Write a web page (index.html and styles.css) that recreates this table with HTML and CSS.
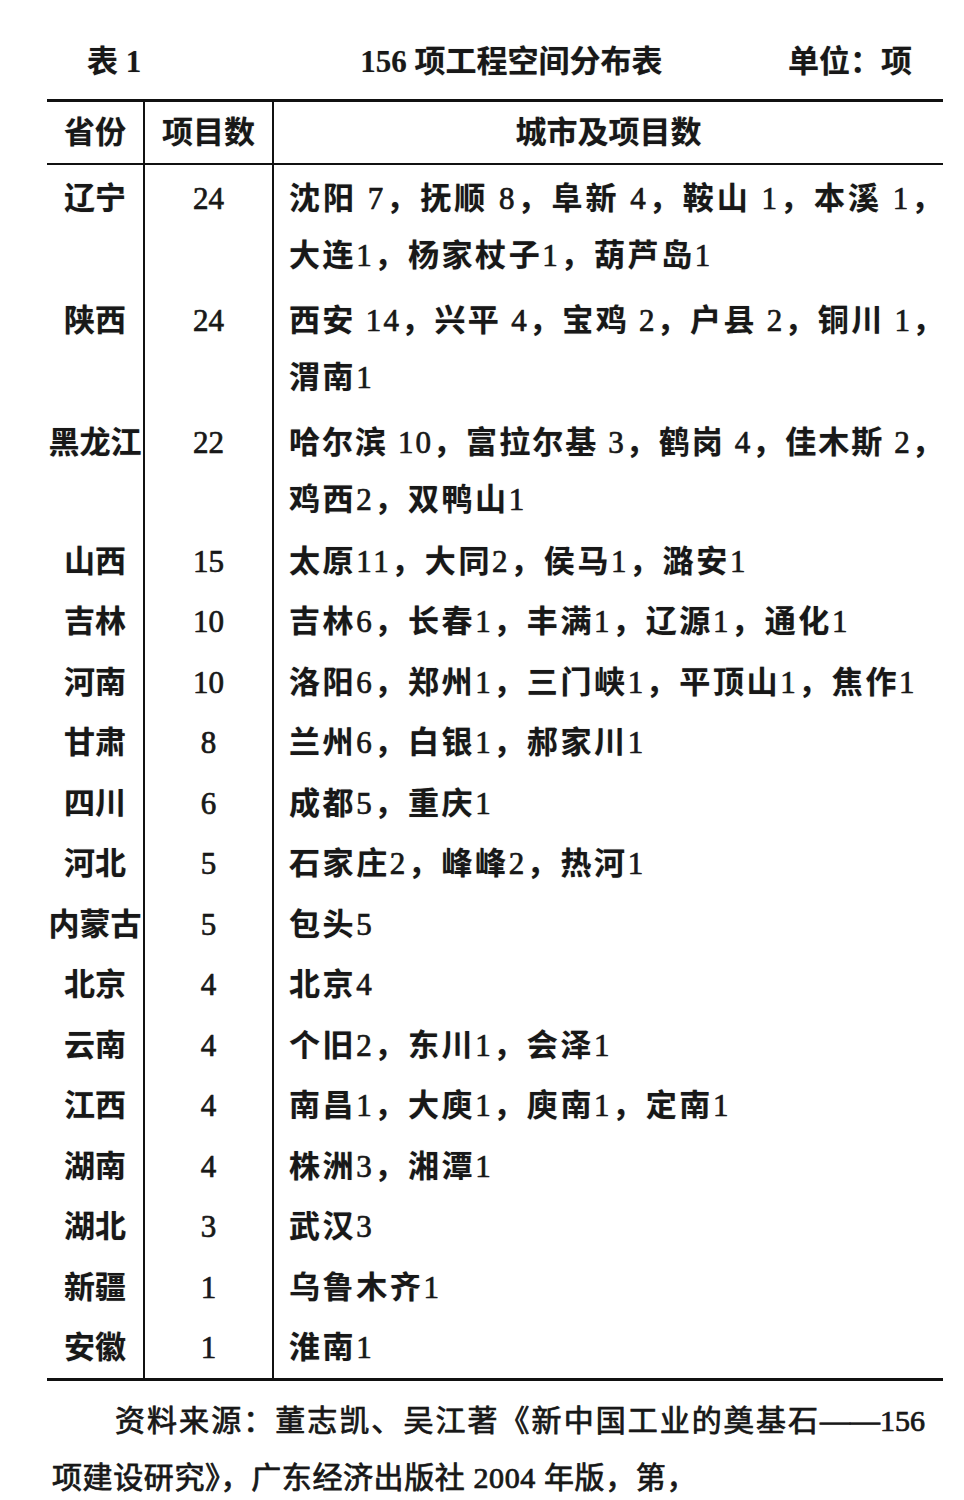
FILE: index.html
```html
<!DOCTYPE html>
<html lang="zh-CN">
<head>
<meta charset="utf-8">
<title>156 项工程空间分布表</title>
<link rel="stylesheet" href="styles.css">
</head>
<body>
<div class="page">
  <div class="caption">
    <span class="cap-num">表 1</span>
    <span class="cap-title">156 项工程空间分布表</span>
    <span class="cap-unit">单位：项</span>
  </div>

  <table class="grid">
    <colgroup>
      <col class="c1">
      <col class="c2">
      <col class="c3">
    </colgroup>
    <thead>
      <tr>
        <th class="prov">省份</th>
        <th class="cnt-h">项目数</th>
        <th class="city-h">城市及项目数</th>
      </tr>
    </thead>
    <tbody>
      <tr class="two">
        <td class="prov">辽宁</td>
        <td class="cnt">24</td>
        <td class="city"><div class="ls-a">沈阳 <span class="d">7</span>，抚顺 <span class="d">8</span>，阜新 <span class="d">4</span>，鞍山 <span class="d">1</span>，本溪 <span class="d">1</span>，</div><div>大连<span class="d">1</span>，杨家杖子<span class="d">1</span>，葫芦岛<span class="d">1</span></div></td>
      </tr>
      <tr class="two">
        <td class="prov">陕西</td>
        <td class="cnt">24</td>
        <td class="city"><div class="ls-b">西安 <span class="d">14</span>，兴平 <span class="d">4</span>，宝鸡 <span class="d">2</span>，户县 <span class="d">2</span>，铜川 <span class="d">1</span>，</div><div>渭南<span class="d">1</span></div></td>
      </tr>
      <tr class="two">
        <td class="prov">黑龙江</td>
        <td class="cnt">22</td>
        <td class="city"><div class="ls-c">哈尔滨 <span class="d">10</span>，富拉尔基 <span class="d">3</span>，鹤岗 <span class="d">4</span>，佳木斯 <span class="d">2</span>，</div><div>鸡西<span class="d">2</span>，双鸭山<span class="d">1</span></div></td>
      </tr>
      <tr>
        <td class="prov">山西</td>
        <td class="cnt">15</td>
        <td class="city">太原<span class="d">11</span>，大同<span class="d">2</span>，侯马<span class="d">1</span>，潞安<span class="d">1</span></td>
      </tr>
      <tr>
        <td class="prov">吉林</td>
        <td class="cnt">10</td>
        <td class="city">吉林<span class="d">6</span>，长春<span class="d">1</span>，丰满<span class="d">1</span>，辽源<span class="d">1</span>，通化<span class="d">1</span></td>
      </tr>
      <tr>
        <td class="prov">河南</td>
        <td class="cnt">10</td>
        <td class="city">洛阳<span class="d">6</span>，郑州<span class="d">1</span>，三门峡<span class="d">1</span>，平顶山<span class="d">1</span>，焦作<span class="d">1</span></td>
      </tr>
      <tr>
        <td class="prov">甘肃</td>
        <td class="cnt">8</td>
        <td class="city">兰州<span class="d">6</span>，白银<span class="d">1</span>，郝家川<span class="d">1</span></td>
      </tr>
      <tr>
        <td class="prov">四川</td>
        <td class="cnt">6</td>
        <td class="city">成都<span class="d">5</span>，重庆<span class="d">1</span></td>
      </tr>
      <tr>
        <td class="prov">河北</td>
        <td class="cnt">5</td>
        <td class="city">石家庄<span class="d">2</span>，峰峰<span class="d">2</span>，热河<span class="d">1</span></td>
      </tr>
      <tr>
        <td class="prov">内蒙古</td>
        <td class="cnt">5</td>
        <td class="city">包头<span class="d">5</span></td>
      </tr>
      <tr>
        <td class="prov">北京</td>
        <td class="cnt">4</td>
        <td class="city">北京<span class="d">4</span></td>
      </tr>
      <tr>
        <td class="prov">云南</td>
        <td class="cnt">4</td>
        <td class="city">个旧<span class="d">2</span>，东川<span class="d">1</span>，会泽<span class="d">1</span></td>
      </tr>
      <tr>
        <td class="prov">江西</td>
        <td class="cnt">4</td>
        <td class="city">南昌<span class="d">1</span>，大庾<span class="d">1</span>，庾南<span class="d">1</span>，定南<span class="d">1</span></td>
      </tr>
      <tr>
        <td class="prov">湖南</td>
        <td class="cnt">4</td>
        <td class="city">株洲<span class="d">3</span>，湘潭<span class="d">1</span></td>
      </tr>
      <tr>
        <td class="prov">湖北</td>
        <td class="cnt">3</td>
        <td class="city">武汉<span class="d">3</span></td>
      </tr>
      <tr>
        <td class="prov">新疆</td>
        <td class="cnt">1</td>
        <td class="city">乌鲁木齐<span class="d">1</span></td>
      </tr>
      <tr>
        <td class="prov">安徽</td>
        <td class="cnt">1</td>
        <td class="city">淮南<span class="d">1</span></td>
      </tr>
    </tbody>
  </table>

  <div class="source">
    <div class="src-1">资料来源：董志凯、吴江著《新中国工业的奠基石——156</div>
    <div class="src-2">项建设研究》，广东经济出版社 2004 年版，第，</div>
  </div>
</div>
</body>
</html>
```

FILE: styles.css
```css
* {
  box-sizing: border-box;
}

body {
  margin: 0;
  background: #ffffff;
  color: #181818;
  font-family: "Liberation Serif", "Noto Sans CJK SC", serif;
}

.page {
  padding: 40px 21px 0 47px;
}

.d {
  font-weight: 400;
  -webkit-text-stroke: 0.6px currentColor;
}

/* caption line */
.caption {
  display: flex;
  align-items: center;
  height: 44px;
  line-height: 44px;
  font-size: 31px;
  font-weight: 700;
  margin-bottom: 15px;
  white-space: nowrap;
  text-shadow: 0 0 1px rgba(0, 0, 0, 0.35);
}

.cap-num {
  margin-left: 40px;
}

.cap-title {
  margin-left: 219px;
}

.cap-unit {
  margin-left: auto;
  margin-right: 31px;
}

/* table */
.grid {
  width: 896px;
  table-layout: fixed;
  border-collapse: separate;
  border-spacing: 0;
  border-top: 3px solid #111;
  border-bottom: 3px solid #111;
  font-size: 31px;
  font-weight: 700;
  text-shadow: 0 0 1px rgba(0, 0, 0, 0.35);
}

.c1 {
  width: 96px;
}

.c2 {
  width: 129px;
}

.grid th,
.grid td {
  padding: 1.75px 0;
  line-height: 57px;
  vertical-align: top;
  white-space: nowrap;
}

.grid th {
  padding: 0;
  line-height: 61px;
  border-bottom: 2px solid #111;
  font-weight: 700;
}

.grid th + th,
.grid td + td {
  border-left: 2px solid #111;
}

.grid tr.two td {
  padding-top: 5px;
  padding-bottom: 3px;
}

.prov {
  text-align: center;
}

.cnt-h {
  text-align: center;
}

.cnt {
  text-align: center;
  font-weight: 400;
  -webkit-text-stroke: 0.6px currentColor;
}

.city-h {
  text-align: center;
}

.grid td.city {
  padding-left: 15px;
  text-align: left;
  letter-spacing: 2.6px;
}

.grid td.city .ls-a {
  letter-spacing: 3px;
}

.grid td.city .ls-b {
  letter-spacing: 2.3px;
}

.grid td.city .ls-c {
  letter-spacing: 2.05px;
}

/* source note */
.source {
  margin-top: 11px;
  padding-left: 5px;
  padding-right: 18px;
  font-size: 30px;
  line-height: 57px;
  font-weight: 400;
  -webkit-text-stroke: 0.7px currentColor;
  white-space: nowrap;
  text-shadow: 0 0 1px rgba(0, 0, 0, 0.3);
}

.src-1 {
  margin-left: 63px;
  text-align: justify;
  text-align-last: justify;
}

.src-2 {
  letter-spacing: 0.6px;
}
```
